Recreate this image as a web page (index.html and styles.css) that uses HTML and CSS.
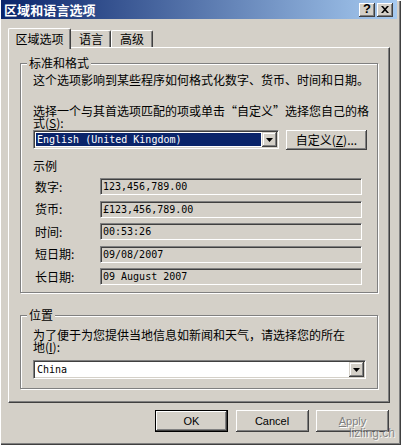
FILE: index.html
```html
<!DOCTYPE html>
<html lang="zh-CN">
<head>
<meta charset="utf-8">
<title>区域和语言选项</title>
<link rel="stylesheet" href="styles.css">
</head>
<body>
<div class="window">
  <div class="titlebar">
    <span class="title">区域和语言选项</span>
    <div class="tb-buttons">
      <span class="tb-btn help">?</span>
      <span class="tb-btn close"><svg width="8" height="7" viewBox="0 0 8 7"><path d="M0 0h2l2 2.2L6 0h2L5 3.5 8 7H6L4 4.8 2 7H0l3-3.5z" fill="#000"/></svg></span>
    </div>
  </div>
  <div class="client">
    <div class="tabs">
      <div class="tab active">区域选项</div>
      <div class="tab t2">语言</div>
      <div class="tab t3">高级</div>
    </div>
    <div class="panel">
      <fieldset class="group g1">
        <legend>标准和格式</legend>
        <p class="desc">这个选项影响到某些程序如何格式化数字、货币、时间和日期。</p>
        <p class="prompt">选择一个与其首选项匹配的项或单击“自定义”选择您自己的格式(<u class="key">S</u>):</p>
        <div class="select-row">
          <div class="combo lang">
            <span class="combo-value selected">English (United Kingdom)</span>
            <span class="drop"><svg width="7" height="4" viewBox="0 0 7 4"><path d="M0 0h7L3.5 4z" fill="#000"/></svg></span>
          </div>
          <button class="btn custom">自定义(<u>Z</u>)...</button>
        </div>
        <div class="samples-title">示例</div>
        <div class="samples">
          <div class="row"><span class="lbl">数字:</span><span class="field">123,456,789.00</span></div>
          <div class="row"><span class="lbl">货币:</span><span class="field">£123,456,789.00</span></div>
          <div class="row"><span class="lbl">时间:</span><span class="field">00:53:26</span></div>
          <div class="row"><span class="lbl">短日期:</span><span class="field">09/08/2007</span></div>
          <div class="row"><span class="lbl">长日期:</span><span class="field">09 August 2007</span></div>
        </div>
      </fieldset>
      <fieldset class="group g2">
        <legend>位置</legend>
        <p class="loc-text">为了便于为您提供当地信息如新闻和天气，请选择您的所在地(<u class="key">I</u>):</p>
        <div class="combo loc">
          <span class="combo-value">China</span>
          <span class="drop"><svg width="7" height="4" viewBox="0 0 7 4"><path d="M0 0h7L3.5 4z" fill="#000"/></svg></span>
        </div>
      </fieldset>
    </div>
    <div class="buttons">
      <button class="btn dlg default">OK</button>
      <button class="btn dlg">Cancel</button>
      <button class="btn dlg disabled"><u>A</u>pply</button>
    </div>
  </div>
  <div class="watermark">lizling.ch</div>
</div>
</body>
</html>
```
FILE: styles.css
```css
* { box-sizing: border-box; }
html, body { margin: 0; padding: 0; }
body {
  width: 401px;
  height: 445px;
  overflow: hidden;
  background: #d4d0c8;
  font-family: "Noto Sans CJK SC", "Noto Sans", sans-serif;
  font-size: 12px;
  color: #000;
}
.window {
  position: relative;
  width: 401px;
  height: 445px;
  background: #d4d0c8;
  box-shadow: inset 1px 1px 0 #fff, inset -1px -1px 0 #404040, inset -2px -2px 0 #808080;
  display: flex;
  flex-direction: column;
}
.titlebar {
  height: 19px;
  margin: 0 4px 0 1px;
  background: linear-gradient(to right, #0a246a, #a6caf0);
  display: flex;
  align-items: center;
  padding: 0 4px 0 3px;
}
.title {
  flex: 1;
  color: #fff;
  font-weight: bold;
  font-size: 13px;
  line-height: 19px;
  letter-spacing: 0.1px;
}
.tb-buttons { display: flex; gap: 2px; }
.tb-btn {
  width: 16px;
  height: 14px;
  background: #d4d0c8;
  box-shadow: inset -1px -1px 0 #404040, inset 1px 1px 0 #fff, inset -2px -2px 0 #808080;
  display: flex;
  align-items: center;
  justify-content: center;
  font: bold 13px "Liberation Sans", sans-serif;
  line-height: 14px;
  padding-bottom: 1px;
}
.client {
  padding: 9px 11px 0 8px;
  display: flex;
  flex-direction: column;
}
.tabs {
  height: 19px;
  display: flex;
  align-items: flex-end;
  position: relative;
  z-index: 1;
}
.tab {
  height: 17px;
  line-height: 16px;
  background: #d4d0c8;
  border-top: 1px solid #fff;
  border-left: 1px solid #fff;
  border-right: 1px solid #404040;
  border-radius: 2px 2px 0 0;
  box-shadow: inset -1px 0 0 #808080;
  text-align: center;
}
.tab.active {
  width: 63px;
  height: 21px;
  line-height: 19px;
  margin-bottom: -2px;
  margin-right: -3px;
  position: relative;
  z-index: 2;
}
.tab.t2 { width: 43px; padding-left: 3px; }
.tab.t3 { width: 42px; }
.panel {
  height: 356px;
  border-top: 1px solid #fff;
  border-left: 1px solid #fff;
  border-right: 1px solid #404040;
  border-bottom: 1px solid #404040;
  box-shadow: inset -1px -1px 0 #808080;
  padding: 9px 11px 0 11px;
}
.group {
  margin: 0;
  min-width: 0;
  border: 1px solid #808080;
  box-shadow: inset 1px 1px 0 #fff, 1px 1px 0 #fff;
  padding: 5px 6px 7px 12px;
}
.group legend {
  margin-left: -6px;
  padding: 0 2px;
  line-height: 12px;
  background: #d4d0c8;
  position: relative;
}
.group p { margin: 0; }
.key {
  display: inline-block;
  line-height: 12px;
}
.desc { line-height: 12px; }
.prompt { margin-top: 19px !important; line-height: 12px; }
.select-row {
  margin-top: 1px;
  display: flex;
  align-items: flex-start;
}
.combo {
  height: 19px;
  display: flex;
  align-items: stretch;
  border: 1px solid;
  border-color: #808080 #fff #fff #808080;
  box-shadow: inset 1px 1px 0 #404040, inset -1px -1px 0 #d4d0c8;
  background: #fff;
  padding: 1px;
}
.combo.lang { width: 246px; }
.combo.loc { width: 333px; margin-top: 7px; }
.combo-value {
  flex: 1;
  margin: 1px;
  padding-left: 1px;
  font: 10px "DejaVu Sans Mono", "Liberation Mono", monospace;
  line-height: 13px;
  white-space: pre;
}
.combo-value.selected { background: #0a246a; color: #fff; }
.drop {
  width: 15px;
  background: #d4d0c8;
  box-shadow: inset -1px -1px 0 #404040, inset 1px 1px 0 #d4d0c8, inset -2px -2px 0 #808080, inset 2px 2px 0 #fff;
  display: flex;
  align-items: center;
  justify-content: center;
}
.btn {
  font-family: "Noto Sans CJK SC", "Noto Sans", sans-serif;
  font-size: 12px;
  color: #000;
  background: #d4d0c8;
  border: 0;
  margin: 0;
  padding: 0;
  box-shadow: inset -1px -1px 0 #404040, inset 1px 1px 0 #fff, inset -2px -2px 0 #808080, inset 2px 2px 0 #d4d0c8;
}
.btn.custom {
  width: 81px;
  height: 20px;
  margin-left: 7px;
  line-height: 18px;
}
.samples-title { margin-top: 10px; line-height: 12px; }
.samples {
  margin-top: 6px;
  display: flex;
  flex-direction: column;
  gap: 5.5px;
}
.row { display: flex; align-items: center; height: 17px; }
.lbl { width: 67px; padding-left: 2px; line-height: 12px; }
.field {
  width: 262px;
  height: 17px;
  border: 1px solid;
  border-color: #808080 #fff #fff #808080;
  box-shadow: inset 1px 1px 0 #404040;
  padding-left: 2px;
  font: 10px "DejaVu Sans Mono", "Liberation Mono", monospace;
  line-height: 15px;
  white-space: pre;
}
.g2 { margin-top: 16px; padding-top: 8px; padding-bottom: 9px; }
.loc-text { width: 318px; line-height: 12px; }
.buttons {
  margin-top: 7px;
  display: flex;
  justify-content: flex-end;
  gap: 7.5px;
  padding-right: 1px;
}
.btn.dlg {
  width: 73px;
  height: 22px;
  font: 11px "Liberation Sans", sans-serif;
}
.btn.default {
  box-shadow: inset 0 0 0 1px #000, inset -2px -2px 0 #404040, inset 2px 2px 0 #fff, inset -3px -3px 0 #808080;
}
.btn.disabled { color: #808080; text-shadow: 1px 1px 0 #fff; }
.watermark {
  position: absolute;
  left: 349px;
  top: 426px;
  font: 12px "Liberation Sans", sans-serif;
  color: rgba(110, 110, 110, 0.75);
  text-shadow: 1px 1px 0 rgba(255, 255, 255, 0.8);
}
```
